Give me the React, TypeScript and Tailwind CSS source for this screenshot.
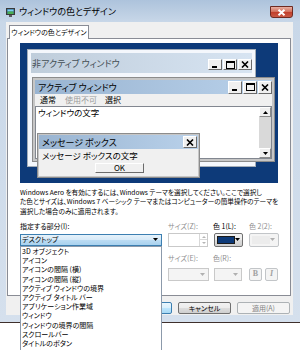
const items = [
  "3D オブジェクト",
  "アイコン",
  "アイコンの間隔 (横)",
  "アイコンの間隔 (縦)",
  "アクティブ ウィンドウの境界",
  "アクティブ タイトル バー",
  "アプリケーション作業域",
  "ウィンドウ",
  "ウィンドウの境界の間隔",
  "スクロールバー",
  "タイトルのボタン",
];

function CapBtn({ kind, h }: { kind: "min" | "max" | "close"; h: string }) {
  return (
    <div
      className={`w-[14px] ${h} flex items-center justify-center bg-[#f0f0f0] border border-t-white border-l-white border-r-[#6b6b6b] border-b-[#6b6b6b]`}
    >
      {kind === "min" && (
        <svg width="8" height="7" viewBox="0 0 8 7">
          <rect x="1" y="5" width="5" height="2" fill="#000" />
        </svg>
      )}
      {kind === "max" && (
        <svg width="9" height="8" viewBox="0 0 9 8">
          <rect x="0.5" y="0.5" width="8" height="7" fill="none" stroke="#000" />
          <rect x="0" y="0" width="9" height="2" fill="#000" />
        </svg>
      )}
      {kind === "close" && (
        <svg width="8" height="7" viewBox="0 0 8 7">
          <path d="M1 0.5 L7 6.5 M7 0.5 L1 6.5" stroke="#000" strokeWidth="1.6" />
        </svg>
      )}
    </div>
  );
}

function Arrow({ color = "#000" }: { color?: string }) {
  return (
    <svg width="5" height="3" viewBox="0 0 5 3">
      <path d="M0 0 H5 L2.5 3 Z" fill={color} />
    </svg>
  );
}

function Preview() {
  return (
    <div className="relative mt-[4px] w-[258px] h-[140px] bg-[#0d3a79] overflow-hidden">
      {/* inactive window */}
      <div className="absolute left-[7px] top-[6px] w-[229px] h-[118px] bg-[#f4f7fc] border border-[#a3adb8] p-[3px] flex flex-col">
        <div className="h-[20px] flex items-center bg-[linear-gradient(90deg,#bfcddb,#d7e4f2)] pl-[1px]">
          <span className="text-[9px] leading-none text-[#434e54] whitespace-nowrap">非アクティブ ウィンドウ</span>
          <div className="ml-auto mt-[3px] flex gap-[1px]">
            <CapBtn kind="min" h="h-[11px]" />
            <CapBtn kind="max" h="h-[11px]" />
            <CapBtn kind="close" h="h-[11px]" />
          </div>
        </div>
      </div>

      {/* active window */}
      <div className="absolute left-[12px] top-[34px] w-[243px] h-[85px] bg-[#c6c6c6] border border-[#8c8c8c] p-[2px] flex flex-col">
        <div className="h-[14px] flex items-center bg-[linear-gradient(90deg,#99b4d1,#b9d1ea)] pl-[3px]">
          <span className="text-[9px] leading-none whitespace-nowrap">アクティブ ウィンドウ</span>
          <div className="ml-auto flex gap-[1px]">
            <CapBtn kind="min" h="h-[13px]" />
            <CapBtn kind="max" h="h-[13px]" />
            <CapBtn kind="close" h="h-[13px]" />
          </div>
        </div>
        <div className="h-[12px] flex items-center bg-[#f0f0f0] pl-[5px] text-[8px] leading-none whitespace-nowrap">
          <span>通常</span>
          <span className="ml-[9px] text-[#9a9a9a]">使用不可</span>
          <span className="ml-[8px]">選択</span>
        </div>
        <div className="flex-1 flex bg-white border border-[#828790]">
          <div className="flex-1 pl-[2px] text-[8.5px] leading-[11px] whitespace-nowrap">ウィンドウの文字</div>
          <div className="w-[12px] flex flex-col bg-[#d9d9d9]">
            <div className="h-[10px] bg-[#f0f0f0] border border-t-white border-l-white border-r-[#8a8a8a] border-b-[#8a8a8a] flex items-center justify-center">
              <svg width="5" height="3" viewBox="0 0 5 3">
                <path d="M0 3 H5 L2.5 0 Z" fill="#000" />
              </svg>
            </div>
            <div className="flex-1" />
            <div className="h-[10px] bg-[#f0f0f0] border border-t-white border-l-white border-r-[#8a8a8a] border-b-[#8a8a8a] flex items-center justify-center">
              <Arrow />
            </div>
          </div>
        </div>
      </div>

      {/* message box */}
      <div className="absolute left-[17px] top-[90px] w-[163px] h-[45px] bg-[#c6c6c6] border border-[#8c8c8c] p-[1px] flex flex-col">
        <div className="h-[14px] flex items-center bg-[linear-gradient(90deg,#99b4d1,#b9d1ea)] pl-[3px] pr-[1px]">
          <span className="text-[9px] leading-none whitespace-nowrap">メッセージ ボックス</span>
          <div className="ml-auto">
            <CapBtn kind="close" h="h-[12px]" />
          </div>
        </div>
        <div className="flex-1 bg-[#f0f0f0] flex flex-col">
          <div className="pl-[3px] mt-[1px] text-[8.5px] leading-[11px] whitespace-nowrap">メッセージ ボックスの文字</div>
          <div className="ml-[56px] mt-[2px] w-[49px] h-[10px] bg-[#f0f0f0] border border-t-white border-l-white border-r-[#6b6b6b] border-b-[#6b6b6b] flex items-center justify-center text-[8px] leading-none">
            OK
          </div>
        </div>
      </div>
    </div>
  );
}

export default function App() {
  return (
    <div className="relative w-[300px] h-[350px] overflow-hidden bg-white text-black font-['Noto_Sans_CJK_JP',sans-serif] [font-feature-settings:'palt']">
      <div className="w-[300px] h-[323px] flex flex-col border-b border-[#3f302c] bg-[linear-gradient(180deg,#adc3dc_0px,#c8d7e8_22px,#d5e0ed_100%)]">
        {/* title bar */}
        <div className="h-[22px] flex items-start pl-[6px] pr-[7px]">
          <svg className="mt-[8px]" width="9" height="9" viewBox="0 0 9 9">
            <rect x="0.5" y="0.5" width="8" height="6" fill="#2f5f8f" stroke="#3a3a3a" />
            <rect x="1.5" y="1.5" width="6" height="2" fill="#7fd0f0" />
            <rect x="1.5" y="3.5" width="6" height="2.5" fill="#4caf50" />
            <rect x="3" y="7" width="3" height="2" fill="#5a5a5a" />
          </svg>
          <span className="ml-[4px] mt-[6px] text-[9px] leading-[12px] whitespace-nowrap">ウィンドウの色とデザイン</span>
          <div className="ml-auto mt-[6px] w-[23px] h-[12px] rounded-b-[3px] border border-[#6e2b22] bg-[linear-gradient(180deg,#e8b0a3_0%,#d4735f_45%,#c2402c_55%,#c95a45_100%)] flex items-center justify-center">
            <svg width="9" height="7" viewBox="0 0 9 7">
              <path d="M1.5 0.8 L7.5 6.2 M7.5 0.8 L1.5 6.2" stroke="#fff" strokeWidth="2" />
            </svg>
          </div>
        </div>

        {/* client */}
        <div className="flex-1 flex pl-[6px] pr-[7px] pb-[7px]">
          <div className="flex-1 flex flex-col bg-[#f0f0f0]">
            <div className="flex pl-[3px] pt-[3px]">
              <div className="relative z-10 -mb-px w-[80px] h-[14px] flex items-center justify-center bg-white border border-b-0 border-[#898c95] text-[7px] leading-none whitespace-nowrap">
                ウィンドウの色とデザイン
              </div>
            </div>

            <div className="ml-[1px] mr-[2px] h-[258px] flex flex-col bg-white border border-[#898c95] pl-[12px]">
              <Preview />

              <div className="mt-[5px] text-[6.65px] leading-[9.3px] whitespace-nowrap">
                <div>Windows Aero を有効にするには、Windows テーマを選択してください。ここで選択し</div>
                <div>た色とサイズは、Windows 7 ベーシック テーマまたはコンピューターの簡単操作のテーマを</div>
                <div>選択した場合のみに適用されます。</div>
              </div>

              {/* row 1 labels */}
              <div className="mt-[6px] h-[9px] flex text-[7px] leading-[9px] whitespace-nowrap">
                <span className="w-[148px]">指定する部分(I):</span>
                <span className="w-[45px] text-[#8e8e8e]">サイズ(Z):</span>
                <span className="w-[36px]">色 1(L):</span>
                <span className="text-[#8e8e8e]">色 2(2):</span>
              </div>

              {/* row 1 controls */}
              <div className="mt-[2px] h-[14px] flex items-start">
                <div className="mt-[1px] w-[142px] h-[12px] flex items-center border border-[#3c7fb1] bg-[linear-gradient(180deg,#e6f2fb_0%,#d6e9f7_50%,#bcdcf3_51%,#a9d2ef_100%)] pl-[1px] pr-[3px] text-[7px] leading-none">
                  <span>デスクトップ</span>
                  <span className="ml-auto">
                    <Arrow />
                  </span>
                </div>
                <div className="ml-[6px] w-[40px] h-[14px] flex border border-[#c9c9c9] bg-white">
                  <div className="flex-1" />
                  <div className="w-[8px] flex flex-col border-l border-[#d8d8d8]">
                    <div className="flex-1 flex items-center justify-center">
                      <svg width="4" height="2" viewBox="0 0 4 2">
                        <path d="M0 2 H4 L2 0 Z" fill="#b5b5b5" />
                      </svg>
                    </div>
                    <div className="flex-1 flex items-center justify-center border-t border-[#d8d8d8]">
                      <svg width="4" height="2" viewBox="0 0 4 2">
                        <path d="M0 0 H4 L2 2 Z" fill="#b5b5b5" />
                      </svg>
                    </div>
                  </div>
                </div>
                <div className="ml-[6px] w-[29px] h-[14px] flex items-center rounded-[2px] border border-[#707070] bg-[linear-gradient(180deg,#f2f2f2_0%,#ebebeb_50%,#dddddd_51%,#cfcfcf_100%)] pl-[2px] pr-[2px]">
                  <div className="w-[18px] h-[8px] bg-[#0d3a79] border border-[#1a1a1a]" />
                  <span className="ml-auto">
                    <Arrow />
                  </span>
                </div>
                <div className="ml-[6px] w-[30px] h-[14px] flex items-center rounded-[2px] border border-[#c2c5c8] bg-[#f4f4f4] pl-[2px] pr-[3px]">
                  <div className="w-[18px] h-[8px] bg-[#ececec]" />
                  <span className="ml-auto">
                    <Arrow color="#b0b0b0" />
                  </span>
                </div>
              </div>

              {/* row 2 labels (left label lies under the open list) */}
              <div className="mt-[7px] h-[9px] flex text-[7px] leading-[9px] whitespace-nowrap text-[#8e8e8e]">
                <span className="w-[148px]" />
                <span className="w-[45px]">サイズ(E):</span>
                <span>色(R):</span>
              </div>

              {/* row 2 controls */}
              <div className="mt-[5px] h-[13px] flex">
                <div className="w-[142px] h-[13px]" />
                <div className="ml-[6px] w-[41px] h-[13px] flex items-center justify-end pr-[3px] border border-[#c9c9c9] bg-[#f4f4f4]">
                  <Arrow color="#b0b0b0" />
                </div>
                <div className="ml-[5px] w-[28px] h-[13px] flex items-center justify-end pr-[3px] border border-[#c9c9c9] bg-[#f4f4f4]">
                  <Arrow color="#b0b0b0" />
                </div>
                <div className="ml-[7px] w-[13px] h-[13px] flex items-center justify-center rounded-[2px] border border-[#c2c5c8] bg-[#f4f4f4] font-['Liberation_Serif',serif] font-bold text-[8px] leading-none text-[#a0a0a0]">
                  B
                </div>
                <div className="ml-[3px] w-[13px] h-[13px] flex items-center justify-center rounded-[2px] border border-[#c2c5c8] bg-[#f4f4f4] font-['Liberation_Serif',serif] font-bold italic text-[8px] leading-none text-[#a0a0a0]">
                  I
                </div>
              </div>
            </div>

            {/* dialog buttons */}
            <div className="mt-[6px] flex justify-end gap-[6px] pr-[3px]">
              <div className="w-[53px] h-[12px] flex items-center justify-center rounded-[2px] border border-[#3c7fb1] bg-[linear-gradient(180deg,#eaf6fd_0%,#d9f0fc_50%,#bee6fd_51%,#a7d9f5_100%)] text-[7px] leading-none">
                OK
              </div>
              <div className="w-[53px] h-[12px] flex items-center justify-center rounded-[2px] border border-[#707070] bg-[linear-gradient(180deg,#f2f2f2_0%,#ebebeb_50%,#dddddd_51%,#cfcfcf_100%)] text-[7px] leading-none">
                キャンセル
              </div>
              <div className="w-[53px] h-[12px] flex items-center justify-center rounded-[2px] border border-[#adb2b5] bg-[#f4f4f4] text-[7px] leading-none text-[#838383]">
                適用(A)
              </div>
            </div>
          </div>
        </div>
      </div>

      {/* open dropdown list */}
      <div className="absolute left-[20px] top-[246px] w-[142px] h-[110px] bg-white border border-[#8c9aab] pl-[1px] text-[7px] leading-[9.2px] whitespace-nowrap">
        {items.map((t) => (
          <div key={t}>{t}</div>
        ))}
      </div>
    </div>
  );
}
